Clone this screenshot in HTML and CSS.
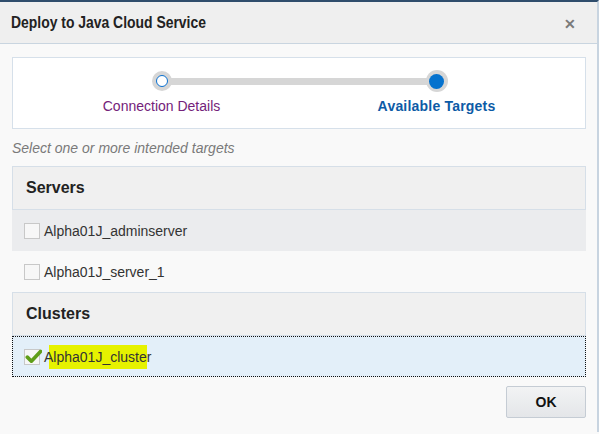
FILE: index.html
```html
<!DOCTYPE html>
<html>
<head>
<meta charset="utf-8">
<link rel="stylesheet" href="styles.css">
</head>
<body>
<div class="dialog">
  <div class="header">
    <span class="title">Deploy to Java Cloud Service</span>
    <span class="close">&#x2715;</span>
  </div>
  <div class="content">
    <div class="train">
      <div class="step step-first">
        <div class="marker"><span class="ring"><span class="dot dot-open"></span></span></div>
        <div class="label label-visited">Connection Details</div>
      </div>
      <div class="step step-last">
        <div class="marker"><span class="ring ring-big"><span class="dot dot-current"></span></span></div>
        <div class="label label-current">Available Targets</div>
      </div>
    </div>
    <div class="hint">Select one or more intended targets</div>
    <div class="group">
      <div class="group-head">Servers</div>
      <div class="row row-alt"><span class="cb"></span><span class="name">Alpha01J_adminserver</span></div>
      <div class="row"><span class="cb"></span><span class="name">Alpha01J_server_1</span></div>
      <div class="group-head">Clusters</div>
      <div class="row row-selected"><span class="cb cb-checked"><svg viewBox="0 0 16 16" width="17" height="17"><path d="M2.2 8.6 L6 12.4 L14.6 3.2" fill="none" stroke="#5f9e19" stroke-width="3.4" stroke-linecap="round" stroke-linejoin="round"/></svg></span><span class="name"><span class="first">A</span><mark class="hl">lpha01J_cluste</mark>r</span></div>
    </div>
    <div class="actions">
      <button class="btn">OK</button>
    </div>
  </div>
</div>
</body>
</html>
```

FILE: styles.css
```css
html, body {
  margin: 0;
  padding: 0;
  background: #f9f9f9;
}
body {
  font-family: "Liberation Sans", Arial, sans-serif;
  color: #333;
  width: 599px;
  height: 434px;
  overflow: hidden;
}
.dialog {
  border-top: 2px solid #2f4d6c;
  border-right: 2px solid #c8d4e0;
  background: #f9f9f9;
  height: 432px;
  box-sizing: border-box;
}
.header {
  height: 41px;
  background: #efefef;
  border-bottom: 1px solid #c9d5e0;
  display: flex;
  align-items: center;
  justify-content: space-between;
  padding: 0 21px 0 11px;
}
.title {
  display: inline-block;
  font-size: 16px;
  font-weight: bold;
  color: #222;
  transform: scaleX(0.87);
  transform-origin: left center;
}
.close {
  font-size: 14px;
  font-weight: bold;
  color: #7a7a7a;
  margin-top: 2px;
}
.content {
  padding: 13px 11px 0 12px;
}
.train {
  height: 72px;
  box-sizing: border-box;
  background: #fff;
  border: 1px solid #d6e0ea;
  display: grid;
  grid-template-columns: 275px 275px;
  padding: 0 11px;
}
.step {
  display: flex;
  flex-direction: column;
  align-items: center;
}
.marker {
  position: relative;
  width: 100%;
  height: 24px;
  margin-top: 11px;
  display: flex;
  justify-content: center;
  align-items: center;
}
.marker::before {
  content: "";
  position: absolute;
  top: 9px;
  height: 7px;
  background: #d6d6d6;
}
.step-first .marker::before { left: 50%; right: 0; }
.step-last .marker::before { left: 0; right: 50%; }
.ring {
  position: relative;
  width: 20px;
  height: 20px;
  border-radius: 50%;
  background: #d6d6d6;
  display: flex;
  justify-content: center;
  align-items: center;
}
.ring-big {
  width: 22px;
  height: 22px;
}
.dot-open {
  width: 10px;
  height: 10px;
  border-radius: 50%;
  background: #fff;
  border: 1.5px solid #0a70d0;
}
.dot-current {
  width: 15px;
  height: 15px;
  border-radius: 50%;
  background: #0572ce;
}
.label {
  font-size: 14px;
  margin-top: 5px;
}
.label-visited { color: #74227a; }
.label-current { color: #0d5ba6; font-weight: bold; letter-spacing: 0.2px; }
.hint {
  font-size: 14px;
  font-style: italic;
  color: #7a7a7a;
  padding: 11px 0 0 0;
  height: 26px;
}
.group {
  display: flex;
  flex-direction: column;
}
.group-head {
  height: 44px;
  box-sizing: border-box;
  background: #f0f0f0;
  border: 1px solid #d6dfe8;
  display: flex;
  align-items: center;
  padding-left: 13px;
  font-size: 16px;
  font-weight: bold;
  color: #222;
}
.row {
  height: 41px;
  box-sizing: border-box;
  display: flex;
  align-items: center;
  padding-left: 12px;
  font-size: 14px;
  color: #333;
}
.row-alt { background: #ebecee; }
.row-selected {
  background: #e3eff9;
  outline: 1px dotted #111;
  outline-offset: -1px;
}
.cb {
  width: 14px;
  height: 14px;
  border: 1px solid #c8c8c8;
  background: #f7f7f7;
  margin-right: 4px;
  position: relative;
  flex: none;
}
.cb-checked svg {
  position: absolute;
  left: 0;
  top: -2px;
}
.first {
  position: relative;
}
.hl {
  background: #e6f200;
  color: #333;
  padding: 4px 0 4px 4px;
  margin-left: -4px;
}
.actions {
  display: flex;
  justify-content: flex-end;
  padding-top: 9px;
}
.btn {
  width: 80px;
  height: 32px;
  font-family: "Liberation Sans", Arial, sans-serif;
  font-size: 14px;
  font-weight: bold;
  color: #111;
  background: linear-gradient(#f2f3f4, #e4e6e9);
  border: 1px solid #c5ccd4;
  border-radius: 2px;
}
```
